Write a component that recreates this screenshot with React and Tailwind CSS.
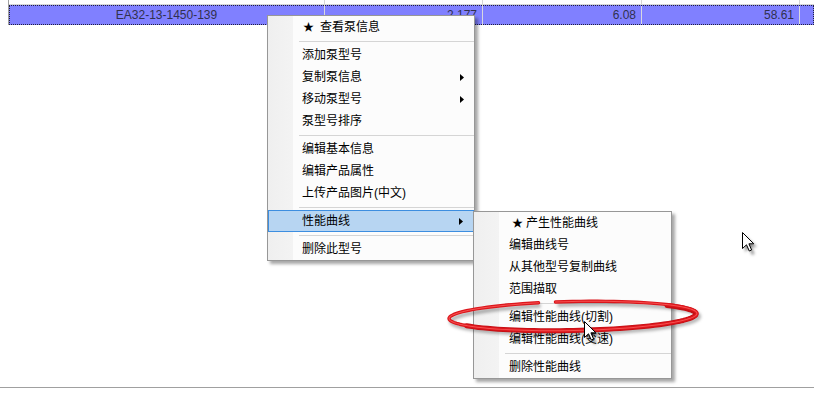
import React from 'react'

const FONT = { fontFamily: '"Liberation Sans", "Noto Sans CJK SC", sans-serif' }

const mainItems = [
  { label: '查看泵信息', star: true },
  'sep',
  { label: '添加泵型号' },
  { label: '复制泵信息', sub: true },
  { label: '移动泵型号', sub: true },
  { label: '泵型号排序' },
  'sep',
  { label: '编辑基本信息' },
  { label: '编辑产品属性' },
  { label: '上传产品图片(中文)' },
  'sep',
  { label: '性能曲线', sub: true, active: true },
  'sep',
  { label: '删除此型号' },
]

const curveItems = [
  { label: '产生性能曲线', star: true },
  { label: '编辑曲线号' },
  { label: '从其他型号复制曲线' },
  { label: '范围描取' },
  'sep',
  { label: '编辑性能曲线(切割)' },
  { label: '编辑性能曲线(变速)' },
  'sep',
  { label: '删除性能曲线' },
]

function Menu({ items, className, textPad, starPad, starWidth }) {
  return (
    <div
      className={`absolute border border-[#979797] bg-[linear-gradient(to_right,#efefef_0,#f3f3f3_25px,#fcfcfc_25px)] shadow-[3px_3px_3px_rgba(0,0,0,0.35)] ${className}`}
    >
      {items.map((item, i) =>
        item === 'sep' ? (
          <div key={i} className="h-[6px] flex items-center pl-[31px]">
            <div className="h-px flex-1 bg-[#d5d5d5]" />
          </div>
        ) : (
          <div
            key={i}
            className={`h-[22px] flex items-center text-[12px] leading-none text-black ${
              item.active ? 'bg-[#b7d5f2] border border-[#3d8ee0]' : ''
            }`}
            style={{ paddingLeft: (item.star ? starPad : textPad) - (item.active ? 1 : 0) }}
          >
            {item.star && (
              <span className="text-[11px] leading-none shrink-0" style={{ width: starWidth }}>
                ★
              </span>
            )}
            <span>{item.label}</span>
            {item.sub && (
              <svg className="ml-auto mr-[10px]" width="4" height="7" viewBox="0 0 4 7">
                <path d="M0 0L4 3.5L0 7Z" fill="#000" />
              </svg>
            )}
          </div>
        )
      )}
    </div>
  )
}

function Cursor({ className }) {
  return (
    <svg className={`absolute pointer-events-none ${className}`} width="20" height="26" viewBox="0 0 20 26">
      <defs>
        <filter id="cblur" x="-50%" y="-50%" width="200%" height="200%">
          <feGaussianBlur stdDeviation="1.6" />
        </filter>
      </defs>
      <path
        d="M3 4 L3 20 L7 16 L10 23 L12.5 22 L9.5 15 L15 15 Z"
        fill="rgba(0,0,0,0.45)"
        filter="url(#cblur)"
      />
      <path
        d="M0.5 0.5 L0.5 16.5 L4.5 12.8 L7.3 19 L9.6 18 L6.9 11.8 L11.8 11.8 Z"
        fill="#fff"
        stroke="#000"
        strokeWidth="1"
        strokeLinejoin="round"
      />
    </svg>
  )
}

function Cell({ w, align = 'right', children, last }) {
  return (
    <div
      className={`h-full flex items-center ${last ? 'flex-1' : 'border-r border-[#d8d8e0]'} ${
        align === 'center' ? 'justify-center' : 'justify-end pr-[5px]'
      }`}
      style={last ? undefined : { width: w }}
    >
      {children}
    </div>
  )
}

// hand drawn ellipse: points along an ellipse, leaving a small gap near the top
function ellipsePath(cx, cy, rx, ry, from, to, steps = 90) {
  let d = ''
  for (let i = 0; i <= steps; i++) {
    const t = from + ((to - from) * i) / steps
    const x = cx + rx * Math.cos(t)
    const y = cy - ry * Math.sin(t)
    d += `${i ? 'L' : 'M'}${x.toFixed(2)} ${y.toFixed(2)} `
  }
  return d
}

export default function App() {
  const cols = [316, 158, 159, 158]
  // angles measured counter-clockwise; gap between ~98deg and ~106deg at the top
  const ring = ellipsePath(145, 31, 124, 14.5, (98 * Math.PI) / 180, ((106 - 360) * Math.PI) / 180)
  const thick = ellipsePath(145, 31.5, 123, 14, (40 * Math.PI) / 180, (-150 * Math.PI) / 180, 60)
  return (
    <div className="relative w-[814px] h-[394px] bg-white overflow-hidden" style={FONT}>
      {/* grid */}
      <div className="ml-[8px] border-l border-[#a0a0a0] h-[25px] flex flex-col">
        <div className="h-[5px] flex border-b border-[#d5d5d5]">
          {cols.map((w, i) => (
            <div key={i} className="h-full border-r border-[#d5d5d5]" style={{ width: w }} />
          ))}
        </div>
        <div className="h-[20px] flex bg-[#8080ff] text-[12px] text-[#30304f] outline-1 outline-dotted outline-[#202040] -outline-offset-1">
          <Cell w={cols[0]} align="center">EA32-13-1450-139</Cell>
          <Cell w={cols[1]}>2.177</Cell>
          <Cell w={cols[2]}>6.08</Cell>
          <Cell w={cols[3]}>58.61</Cell>
          <Cell last />
        </div>
      </div>
      <div className="mt-[362px] border-t border-[#a0a0a0]" />

      {/* context menus */}
      <Menu items={mainItems} className="left-[267px] top-[15px] w-[208px]" textPad={34} starPad={35} starWidth={17} />
      <Menu items={curveItems} className="left-[473px] top-[211px] w-[199px]" textPad={35} starPad={38} starWidth={14} />

      {/* red annotation ellipse */}
      <svg className="absolute left-[428px] top-[285px] pointer-events-none" width="300" height="70" viewBox="0 0 300 70">
        <defs>
          <filter id="eblur" x="-10%" y="-50%" width="120%" height="200%">
            <feGaussianBlur stdDeviation="1.6" />
          </filter>
        </defs>
        <g transform="rotate(-1.2 145 31)">
          <path d={ring} fill="none" stroke="rgba(0,0,0,0.3)" strokeWidth="4" transform="translate(2 3)" filter="url(#eblur)" />
          <path d={thick} fill="none" stroke="#c40f14" strokeWidth="5" strokeLinecap="round" strokeLinejoin="round" />
          <path d={ring} fill="none" stroke="#dc161c" strokeWidth="3.4" strokeLinecap="round" strokeLinejoin="round" />
          <path d={ring} fill="none" stroke="#f65050" strokeWidth="1" strokeLinecap="round" strokeLinejoin="round" />
        </g>
      </svg>

      <Cursor className="left-[584px] top-[321px]" />
      <Cursor className="left-[742px] top-[232px]" />
    </div>
  )
}
